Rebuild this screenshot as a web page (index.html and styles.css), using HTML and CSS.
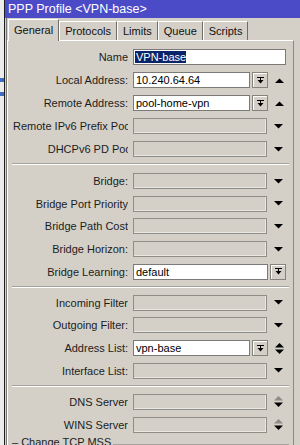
FILE: index.html
```html
<!DOCTYPE html>
<html lang="en">
<head>
    <meta charset="UTF-8">
    <meta name="viewport" content="width=device-width, initial-scale=1.0">
    <title>PPP Profile &lt;VPN-base&gt;</title>
    <link rel="stylesheet" href="styles.css">
</head>
<body>
    <div class="desk">
        <!-- sisa jendela lain di belakang -->
        <div class="behind">
            <span class="mark m1"></span>
            <span class="mark m2"></span>
        </div>

        <div class="window">
            <div class="titlebar">PPP Profile &lt;VPN-base&gt;</div>

            <div class="client">
                <div class="tabs">
                    <span class="tab active">General</span>
                    <span class="tab">Protocols</span>
                    <span class="tab">Limits</span>
                    <span class="tab">Queue</span>
                    <span class="tab">Scripts</span>
                </div>

                <div class="panel">
                    <div class="group">
                        <div class="row">
                            <span class="lbl">Name</span>
                            <span class="edit wide"><span class="sel">VPN-base</span></span>
                        </div>
                        <div class="row">
                            <span class="lbl">Local Address:</span>
                            <span class="edit">10.240.64.64</span>
                            <span class="drop"><svg width="7" height="7" viewBox="0 0 7 7"><rect x="0" y="0" width="7" height="1"/><rect x="3" y="1" width="1" height="2"/><polygon points="0.5,3 6.5,3 3.5,6.5"/></svg></span>
                            <span class="arrow"><svg width="9" height="5" viewBox="0 0 9 5"><polygon points="0,5 4.5,0.5 9,5"/></svg></span>
                        </div>
                        <div class="row">
                            <span class="lbl">Remote Address:</span>
                            <span class="edit">pool-home-vpn</span>
                            <span class="drop"><svg width="7" height="7" viewBox="0 0 7 7"><rect x="0" y="0" width="7" height="1"/><rect x="3" y="1" width="1" height="2"/><polygon points="0.5,3 6.5,3 3.5,6.5"/></svg></span>
                            <span class="arrow"><svg width="9" height="5" viewBox="0 0 9 5"><polygon points="0,5 4.5,0.5 9,5"/></svg></span>
                        </div>
                        <div class="row">
                            <span class="lbl">Remote IPv6 Prefix Pool:</span>
                            <span class="edit off"></span>
                            <span class="arrow"><svg width="9" height="5" viewBox="0 0 9 5"><polygon points="0,0 9,0 4.5,4.5"/></svg></span>
                        </div>
                        <div class="row">
                            <span class="lbl"><span class="over">DHCPv6 PD Pool:</span></span>
                            <span class="edit off"></span>
                            <span class="arrow"><svg width="9" height="5" viewBox="0 0 9 5"><polygon points="0,0 9,0 4.5,4.5"/></svg></span>
                        </div>
                    </div>

                    <div class="sep first"></div>

                    <div class="group tight">
                        <div class="row">
                            <span class="lbl">Bridge:</span>
                            <span class="edit off"></span>
                            <span class="arrow"><svg width="9" height="5" viewBox="0 0 9 5"><polygon points="0,0 9,0 4.5,4.5"/></svg></span>
                        </div>
                        <div class="row">
                            <span class="lbl">Bridge Port Priority</span>
                            <span class="edit off"></span>
                            <span class="arrow"><svg width="9" height="5" viewBox="0 0 9 5"><polygon points="0,0 9,0 4.5,4.5"/></svg></span>
                        </div>
                        <div class="row">
                            <span class="lbl">Bridge Path Cost</span>
                            <span class="edit off"></span>
                            <span class="arrow"><svg width="9" height="5" viewBox="0 0 9 5"><polygon points="0,0 9,0 4.5,4.5"/></svg></span>
                        </div>
                        <div class="row">
                            <span class="lbl">Bridge Horizon:</span>
                            <span class="edit off"></span>
                            <span class="arrow"><svg width="9" height="5" viewBox="0 0 9 5"><polygon points="0,0 9,0 4.5,4.5"/></svg></span>
                        </div>
                        <div class="row">
                            <span class="lbl">Bridge Learning:</span>
                            <span class="edit wide-drop">default</span>
                            <span class="drop"><svg width="7" height="7" viewBox="0 0 7 7"><rect x="0" y="0" width="7" height="1"/><rect x="3" y="1" width="1" height="2"/><polygon points="0.5,3 6.5,3 3.5,6.5"/></svg></span>
                        </div>
                    </div>

                    <div class="sep"></div>

                    <div class="group tight">
                        <div class="row">
                            <span class="lbl">Incoming Filter</span>
                            <span class="edit off"></span>
                            <span class="arrow"><svg width="9" height="5" viewBox="0 0 9 5"><polygon points="0,0 9,0 4.5,4.5"/></svg></span>
                        </div>
                        <div class="row">
                            <span class="lbl">Outgoing Filter:</span>
                            <span class="edit off"></span>
                            <span class="arrow"><svg width="9" height="5" viewBox="0 0 9 5"><polygon points="0,0 9,0 4.5,4.5"/></svg></span>
                        </div>
                        <div class="row">
                            <span class="lbl">Address List:</span>
                            <span class="edit">vpn-base</span>
                            <span class="drop"><svg width="7" height="7" viewBox="0 0 7 7"><rect x="0" y="0" width="7" height="1"/><rect x="3" y="1" width="1" height="2"/><polygon points="0.5,3 6.5,3 3.5,6.5"/></svg></span>
                            <span class="arrow"><svg width="9" height="11" viewBox="0 0 9 11"><polygon points="0,4.5 4.5,0 9,4.5"/><polygon points="0,6.5 9,6.5 4.5,11"/></svg></span>
                        </div>
                        <div class="row">
                            <span class="lbl">Interface List:</span>
                            <span class="edit off"></span>
                            <span class="arrow"><svg width="9" height="5" viewBox="0 0 9 5"><polygon points="0,0 9,0 4.5,4.5"/></svg></span>
                        </div>
                    </div>

                    <div class="sep"></div>

                    <div class="group tight">
                        <div class="row">
                            <span class="lbl">DNS Server</span>
                            <span class="edit off"></span>
                            <span class="arrow"><svg width="9" height="11" viewBox="0 0 9 11"><polygon class="dim" points="0,4.5 4.5,0 9,4.5"/><polygon points="0,6.5 9,6.5 4.5,11"/></svg></span>
                        </div>
                        <div class="row">
                            <span class="lbl">WINS Server</span>
                            <span class="edit off"></span>
                            <span class="arrow"><svg width="9" height="11" viewBox="0 0 9 11"><polygon class="dim" points="0,4.5 4.5,0 9,4.5"/><polygon points="0,6.5 9,6.5 4.5,11"/></svg></span>
                        </div>
                    </div>

                    <div class="gbox">
                        <span class="gtitle">&ndash; Change TCP MSS</span>
                        <span class="gline"></span>
                    </div>
                </div>
            </div>
        </div>
    </div>
</body>
</html>
```

FILE: styles.css
```css
/* Dasar halaman */
body {
    margin: 0;
    width: 300px;
    height: 445px;
    overflow: hidden;
    background-color: #d4d0c8;
    color: #1c1c1c;
    font-family: "Liberation Sans", Arial, sans-serif;
    font-size: 11px;
}

.desk {
    display: flex;
    height: 445px;
}

/* Jendela di belakang (tepi kiri) */
.behind {
    width: 4px;
    flex: none;
    background-color: #ececec;
    border-right: 1px solid #1f1f1f;
    display: flex;
    flex-direction: column;
}

.mark {
    height: 4px;
    background-color: #3f6cc0;
}

.m1 {
    margin-top: 78px;
}

.m2 {
    margin-top: 10px;
}

/* Jendela utama */
.window {
    flex: 1;
    display: flex;
    flex-direction: column;
    min-width: 0;
}

.titlebar {
    height: 18px;
    line-height: 18px;
    padding-left: 3px;
    background-color: #4b4bc8;
    color: #ffffff;
    font-size: 12.5px;
    white-space: nowrap;
}

.client {
    flex: 1;
    display: flex;
    flex-direction: column;
    margin-left: 1px;
    border-left: 1px solid #77756f;
}

/* Tab */
.tabs {
    display: flex;
    align-items: flex-end;
    height: 21px;
    margin-top: 1px;
    padding-left: 1px;
}

.tab {
    box-sizing: border-box;
    height: 19px;
    padding: 0 5px;
    line-height: 18px;
    border: 1px solid;
    border-color: #ffffff #6f6d69 transparent #ffffff;
    border-bottom: none;
    color: #111;
    white-space: nowrap;
}

.tab.active {
    height: 22px;
    line-height: 21px;
    margin-bottom: -1px;
    position: relative;
    z-index: 1;
    background-color: #d4d0c8;
}

/* Panel isi tab */
.panel {
    box-sizing: border-box;
    width: 287px;
    flex: 1;
    display: flex;
    flex-direction: column;
    padding: 8px 0 0 5px;
    border: 1px solid;
    border-color: #ffffff #8a8883 #8a8883 #ffffff;
}

.group {
    display: flex;
    flex-direction: column;
    gap: 7px;
}

.group.tight {
    gap: 6.7px;
}

.sep {
    border-top: 1px solid #a6a39c;
    border-bottom: 1px solid #ffffff;
    margin: 6px 4px 7px -1px;
}

.sep.first {
    margin-bottom: 8px;
}

.row {
    display: flex;
    align-items: center;
    height: 16px;
}

.lbl {
    width: 115px;
    flex: none;
    margin-right: 5px;
    text-align: right;
    white-space: nowrap;
    overflow: hidden;
    line-height: 16px;
}

.lbl .over {
    margin-right: -9px;
}

/* Kotak isian */
.edit {
    box-sizing: border-box;
    width: 117px;
    height: 16px;
    flex: none;
    padding-left: 2px;
    line-height: 14px;
    background-color: #ffffff;
    border: 1px solid #7c7a76;
    color: #000;
    white-space: nowrap;
    overflow: hidden;
}

.edit.wide {
    width: 153px;
    padding-left: 1px;
}

.edit.wide-drop {
    width: 135px;
}

.edit.off {
    width: 134px;
    background-color: #d4d0c8;
    border-color: #8f8d88;
    box-shadow: inset -1px -1px 0 #e9e7e2;
}

.sel {
    padding-left: 1px;
    background-color: #0a246a;
    color: #ffffff;
}

.drop {
    box-sizing: border-box;
    width: 16px;
    height: 16px;
    flex: none;
    margin-left: 2px;
    border: 1px solid #85837e;
    box-shadow: inset 1px 1px 0 #ffffff;
    display: flex;
    align-items: center;
    justify-content: center;
}

.drop svg {
    fill: #000;
}

.arrow {
    width: 23px;
    flex: none;
    display: flex;
    align-items: center;
    justify-content: center;
}

.arrow svg {
    fill: #000;
}

.arrow .dim {
    fill: #8e8c88;
}

/* Grup "Change TCP MSS" */
.gbox {
    display: flex;
    align-items: flex-start;
    margin-top: 3px;
    margin-left: -1px;
    line-height: 13px;
}

.gtitle {
    white-space: nowrap;
}

.gline {
    flex: 1;
    margin: 8px 4px 0 2px;
    border-top: 1px solid #a6a39c;
    border-bottom: 1px solid #ffffff;
}
```
